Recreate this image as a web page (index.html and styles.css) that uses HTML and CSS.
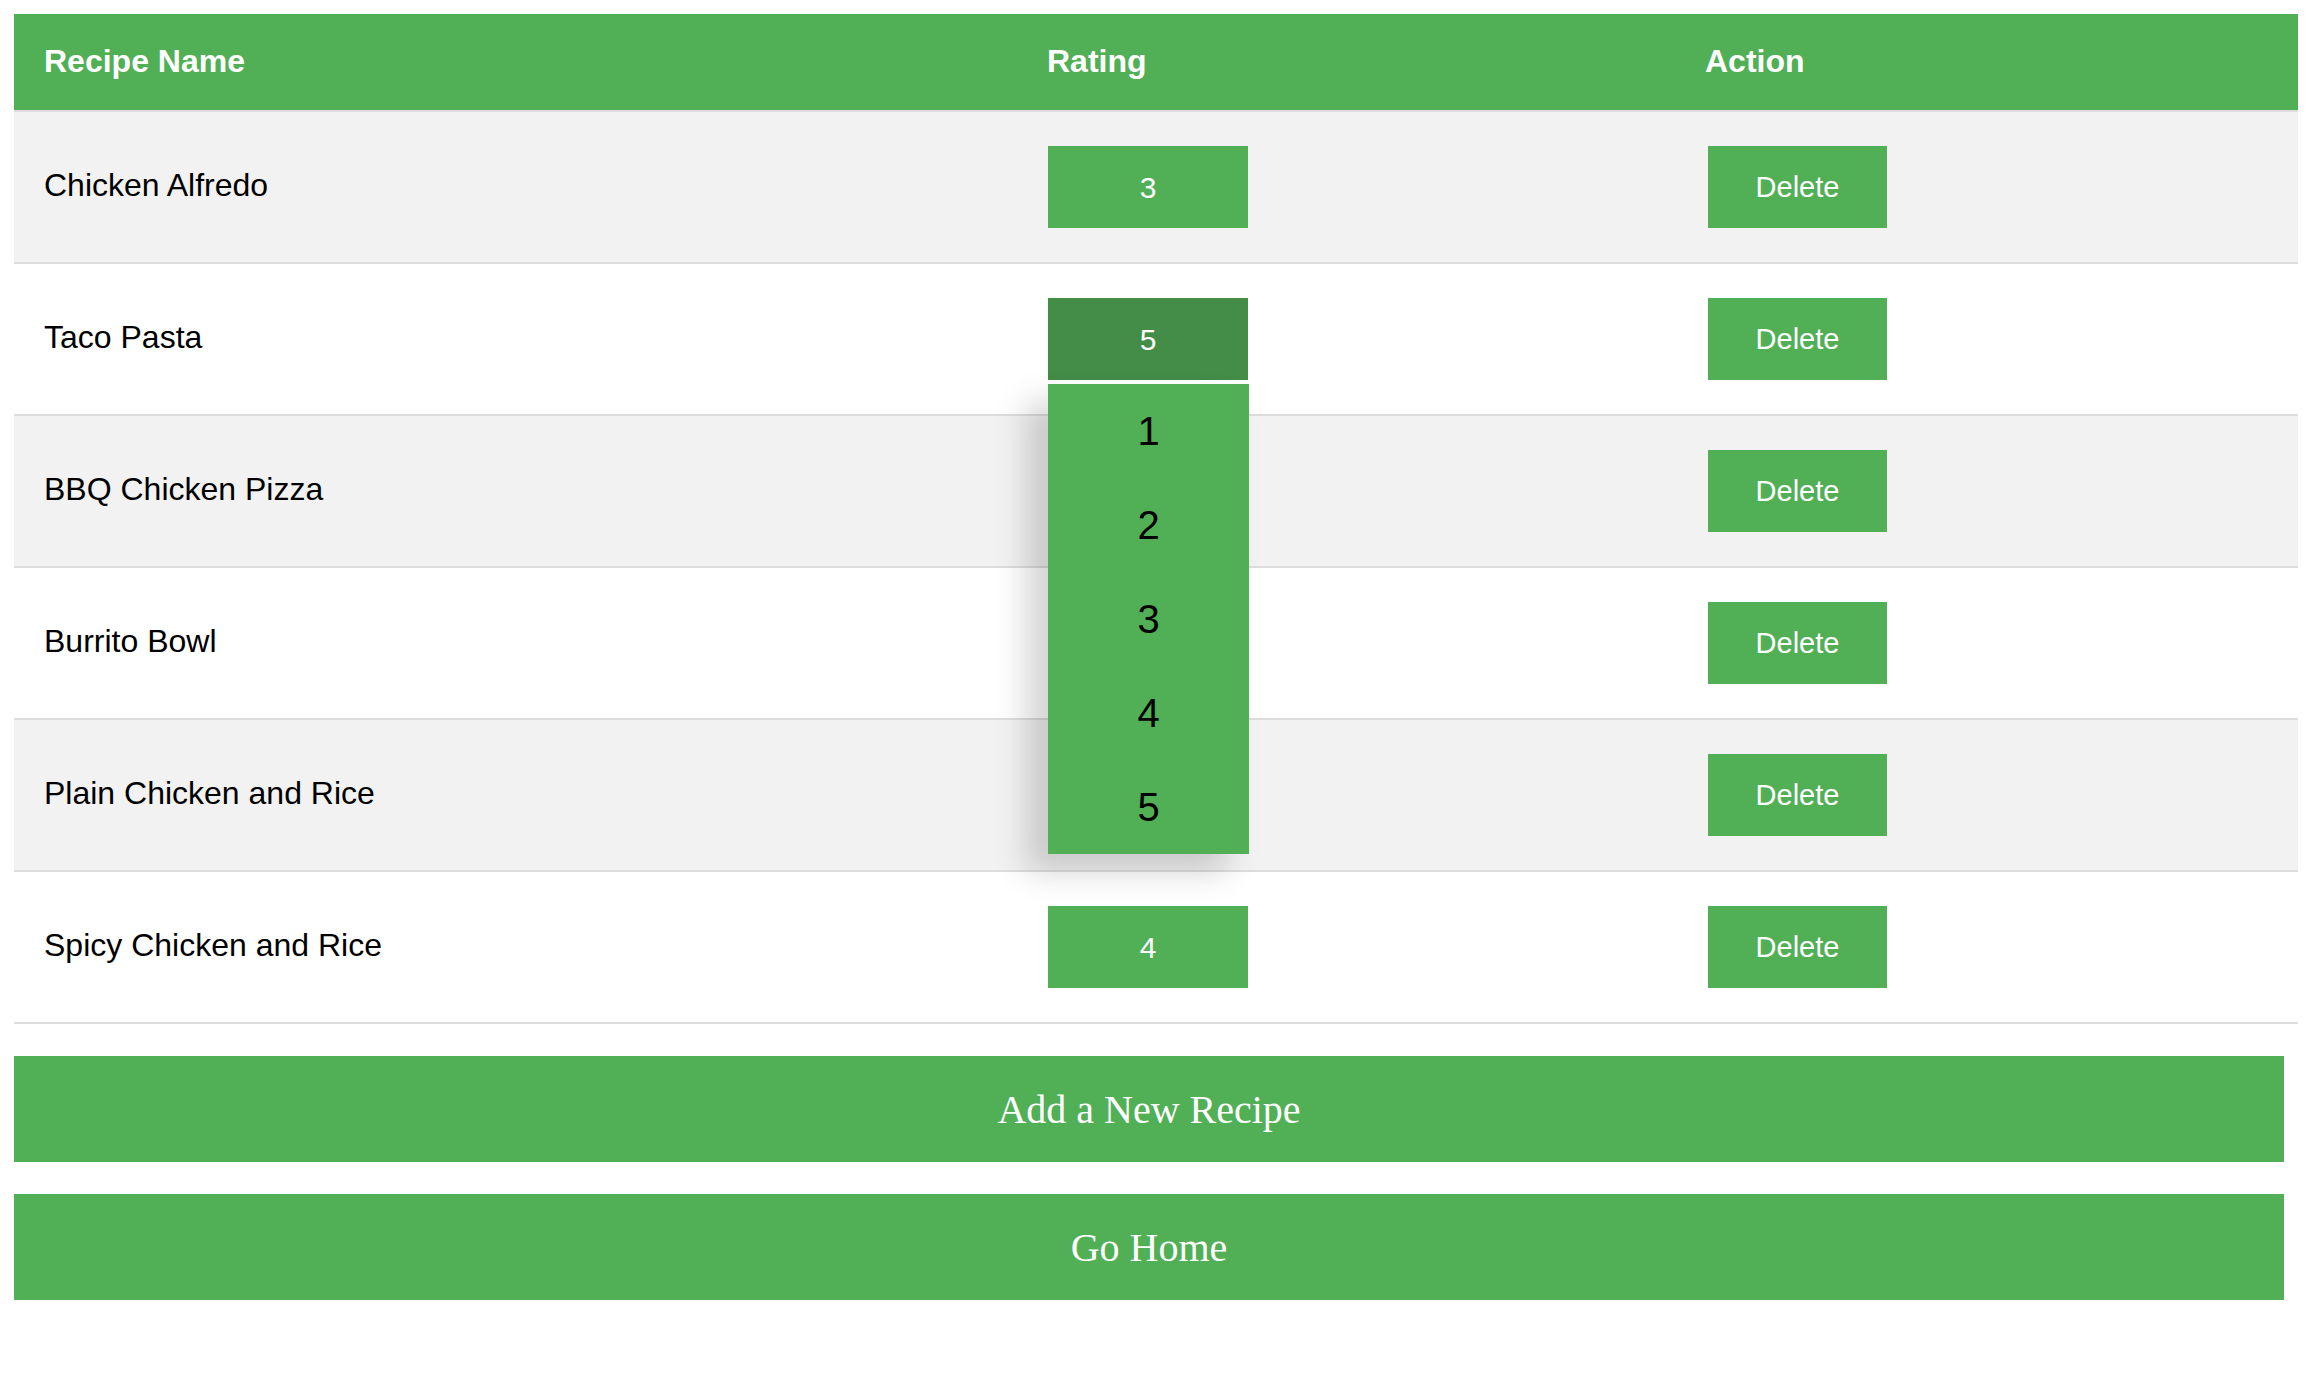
FILE: index.html
```html
<!DOCTYPE html>
<html lang="en">
<head>
<meta charset="utf-8">
<title>Recipes</title>
<link rel="stylesheet" href="styles.css">
</head>
<body>
<main class="page">
  <table class="recipes">
    <colgroup>
      <col class="col-name">
      <col class="col-rating">
      <col class="col-action">
    </colgroup>
    <thead>
      <tr>
        <th>Recipe Name</th>
        <th>Rating</th>
        <th>Action</th>
      </tr>
    </thead>
    <tbody>
      <tr>
        <td class="name-cell">Chicken Alfredo</td>
        <td><div class="rating"><select class="rating-select"><option>1</option><option>2</option><option selected>3</option><option>4</option><option>5</option></select></div></td>
        <td><button class="delete-btn">Delete</button></td>
      </tr>
      <tr>
        <td class="name-cell">Taco Pasta</td>
        <td>
          <div class="rating">
            <select class="rating-select is-open"><option>1</option><option>2</option><option>3</option><option>4</option><option selected>5</option></select>
            <ul class="rating-menu">
              <li>1</li>
              <li>2</li>
              <li>3</li>
              <li>4</li>
              <li>5</li>
            </ul>
          </div>
        </td>
        <td><button class="delete-btn">Delete</button></td>
      </tr>
      <tr>
        <td class="name-cell">BBQ Chicken Pizza</td>
        <td><div class="rating"><select class="rating-select"><option>1</option><option>2</option><option>3</option><option selected>4</option><option>5</option></select></div></td>
        <td><button class="delete-btn">Delete</button></td>
      </tr>
      <tr>
        <td class="name-cell">Burrito Bowl</td>
        <td><div class="rating"><select class="rating-select"><option>1</option><option>2</option><option>3</option><option selected>4</option><option>5</option></select></div></td>
        <td><button class="delete-btn">Delete</button></td>
      </tr>
      <tr>
        <td class="name-cell">Plain Chicken and Rice</td>
        <td><div class="rating"><select class="rating-select"><option>1</option><option>2</option><option selected>3</option><option>4</option><option>5</option></select></div></td>
        <td><button class="delete-btn">Delete</button></td>
      </tr>
      <tr>
        <td class="name-cell">Spicy Chicken and Rice</td>
        <td><div class="rating"><select class="rating-select"><option>1</option><option>2</option><option>3</option><option selected>4</option><option>5</option></select></div></td>
        <td><button class="delete-btn">Delete</button></td>
      </tr>
    </tbody>
  </table>

  <button class="wide-btn">Add a New Recipe</button>
  <button class="wide-btn">Go Home</button>
</main>
</body>
</html>
```

FILE: styles.css
```css
html, body {
  margin: 0;
  padding: 0;
  background: #ffffff;
}

.page {
  padding: 14px 0 0 14px;
  font-family: "Liberation Sans", Arial, Helvetica, sans-serif;
}

.recipes {
  width: 2284px;
  table-layout: fixed;
  border-collapse: separate;
  border-spacing: 0;
}

.col-name { width: 1003px; }
.col-rating { width: 658px; }
.col-action { width: 623px; }

.recipes th {
  background: #51af56;
  color: #ffffff;
  font-weight: bold;
  font-size: 32px;
  line-height: 36px;
  text-align: left;
  padding: 29px 30px 31px;
  border-bottom: 2px solid #dddddd;
}

.recipes td {
  font-size: 32px;
  line-height: 36px;
  color: #000000;
  padding: 34px 30px;
  vertical-align: middle;
  border-bottom: 2px solid #dddddd;
}

.recipes td.name-cell {
  padding-top: 32px;
  padding-bottom: 36px;
}

.recipes tbody tr:nth-child(odd) td {
  background: #f2f2f2;
}

.recipes tbody tr:nth-child(even) td {
  background: #ffffff;
}

.rating {
  position: relative;
  width: 200px;
  margin-left: 1px;
}

.rating-select {
  display: block;
  -webkit-appearance: none;
  appearance: none;
  width: 200px;
  height: 82px;
  margin: 0;
  padding: 0;
  border: none;
  border-radius: 0;
  background: #51af56;
  color: #ffffff;
  font-family: "Liberation Sans", Arial, sans-serif;
  font-size: 30px;
  text-align: center;
  text-align-last: center;
  outline: none;
}

.rating-select.is-open {
  background: #438d47;
}

.rating-menu {
  position: absolute;
  top: 86px;
  left: 0;
  z-index: 5;
  width: 201px;
  margin: 0;
  padding: 0;
  list-style: none;
  background: #51af56;
  box-shadow: -22px 18px 30px rgba(0, 0, 0, 0.17);
}

.rating-menu li {
  height: 94px;
  line-height: 94px;
  text-align: center;
  font-size: 40px;
  color: #000000;
}

.delete-btn {
  display: block;
  width: 179px;
  height: 82px;
  margin: 0 0 0 3px;
  padding: 0;
  border: none;
  border-radius: 0;
  background: #51af56;
  color: #ffffff;
  font-family: "Liberation Sans", Arial, sans-serif;
  font-size: 29px;
  text-align: center;
  cursor: pointer;
}

.wide-btn {
  display: block;
  width: 2270px;
  height: 106px;
  margin: 32px 0 0 0;
  padding: 0;
  border: none;
  border-radius: 0;
  background: #51af56;
  color: #ffffff;
  font-family: "Liberation Serif", "Times New Roman", serif;
  font-size: 40px;
  text-align: center;
  cursor: pointer;
}
```
